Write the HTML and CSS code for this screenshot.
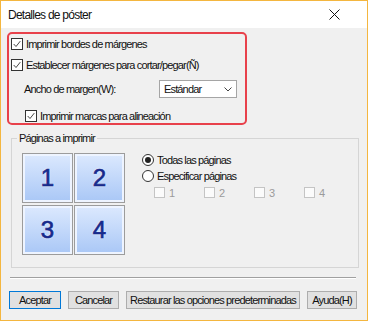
FILE: index.html
```html
<!DOCTYPE html>
<html lang="es">
<head>
  <meta charset="UTF-8" />
  <title>Detalles de póster</title>
  <link rel="stylesheet" href="styles.css">
</head>
<body>
  <div class="window">
    <div class="titlebar">
      <span class="title">Detalles de póster</span>
      <svg class="close" width="11" height="11" viewBox="0 0 11 11">
        <path d="M0.5 0.5 L10.5 10.5 M10.5 0.5 L0.5 10.5" stroke="#111" stroke-width="1" fill="none"/>
      </svg>
    </div>

    <div class="content">
      <!-- Margin options, outlined in red -->
      <div class="highlight">
        <div class="row row-first">
          <span class="box"><svg viewBox="0 0 12 12"><path d="M2 6 L4.8 9 L10 2.5" /></svg></span>
          <span>Imprimir bordes de márgenes</span>
        </div>
        <div class="row row-second">
          <span class="box"><svg viewBox="0 0 12 12"><path d="M2 6 L4.8 9 L10 2.5" /></svg></span>
          <span>Establecer márgenes para cortar/pegar(Ñ)</span>
        </div>
        <div class="row row-combo">
          <span class="combo-label">Ancho de margen(W):</span>
          <div class="combo">
            <span>Estándar</span>
            <svg width="8" height="5" viewBox="0 0 8 5"><path d="M0.5 0.5 L4 4 L7.5 0.5" /></svg>
          </div>
        </div>
        <div class="row row-marks">
          <span class="box"><svg viewBox="0 0 12 12"><path d="M2 6 L4.8 9 L10 2.5" /></svg></span>
          <span>Imprimir marcas para alineación</span>
        </div>
      </div>

      <fieldset class="group">
        <legend>Páginas a imprimir</legend>
        <div class="group-body">
          <div class="tiles">
            <div class="tile">1</div>
            <div class="tile">2</div>
            <div class="tile">3</div>
            <div class="tile">4</div>
          </div>
          <div class="options">
            <div class="radio-row">
              <span class="radio selected"></span>
              <span>Todas las páginas</span>
            </div>
            <div class="radio-row">
              <span class="radio"></span>
              <span>Especificar páginas</span>
            </div>
            <div class="page-checks">
              <div class="page-check"><span class="box disabled"></span>1</div>
              <div class="page-check"><span class="box disabled"></span>2</div>
              <div class="page-check"><span class="box disabled"></span>3</div>
              <div class="page-check"><span class="box disabled"></span>4</div>
            </div>
          </div>
        </div>
      </fieldset>

      <div class="separator"></div>

      <div class="buttons">
        <button class="btn btn-default" style="width: 52px">Aceptar</button>
        <button class="btn" style="width: 51px">Cancelar</button>
        <button class="btn" style="width: 174px">Restaurar las opciones predeterminadas</button>
        <button class="btn" style="width: 50px">Ayuda(H)</button>
      </div>
    </div>
  </div>
</body>
</html>
```

FILE: styles.css
```css
body {
  margin: 0;
  padding: 0;
  font-family: "Liberation Sans", Arial, sans-serif;
  font-size: 11px;
  letter-spacing: -0.85px;
  color: #111;
}

.window {
  width: 368px;
  height: 321px;
  box-sizing: border-box;
  border: 1px solid #f4b63f;
  background-color: #f0f0f0;
  display: flex;
  flex-direction: column;
}

.titlebar {
  height: 27px;
  background: #fff;
  display: flex;
  align-items: center;
  padding-left: 7px;
}

.title {
  font-size: 12px;
  letter-spacing: -0.75px;
  flex: 1;
}

.close {
  margin-right: 27px;
}

.content {
  display: flex;
  flex-direction: column;
}

/* Red outline around the margin options */
.highlight {
  margin: 4px 0 0 6px;
  width: 240px;
  height: 93px;
  box-sizing: border-box;
  border: 2px solid #e8414b;
  border-radius: 5px;
  padding-top: 3px;
}

.row {
  display: flex;
  align-items: center;
  height: 13px;
}

.row-first {
  padding-left: 2px;
}

.row-second {
  padding-left: 2px;
  margin-top: 8px;
}

.row-combo {
  height: 18px;
  margin-top: 9px;
}

.row-marks {
  padding-left: 16px;
  margin-top: 11px;
}

.box {
  width: 12px;
  height: 12px;
  box-sizing: border-box;
  border: 1px solid #333;
  background: #fff;
  margin-right: 3px;
  flex-shrink: 0;
}

.box svg {
  display: block;
  width: 10px;
  height: 10px;
}

.box path {
  stroke: #222;
  stroke-width: 1;
  fill: none;
}

.box.disabled {
  width: 11px;
  height: 11px;
  border-color: #c4c4c4;
  background: #fbfbfb;
  margin-right: 4px;
}

.combo-label {
  width: 135px;
  padding-left: 15px;
}

.combo {
  width: 78px;
  height: 18px;
  box-sizing: border-box;
  border: 1px solid #a5a5a5;
  background: #fff;
  display: flex;
  align-items: center;
  justify-content: space-between;
  padding: 0 4px 0 4px;
}

.combo path {
  stroke: #444;
  stroke-width: 1;
  fill: none;
}

/* Pages group box */
.group {
  margin: 7px 0 0 10px;
  width: 348px;
  height: 136px;
  box-sizing: border-box;
  border: 1px solid #d5d5d5;
  padding: 0;
}

.group legend {
  margin-left: 5px;
  padding: 0 2px;
  line-height: 13px;
}

.group-body {
  display: flex;
  padding: 8px 0 0 10px;
}

.tiles {
  display: grid;
  grid-template-columns: 51px 51px;
  grid-template-rows: 50px 50px;
  column-gap: 1px;
  row-gap: 2px;
}

.tile {
  box-sizing: border-box;
  border: 1px solid #9c9c9c;
  box-shadow: inset 0 0 0 2px #eef4ff;
  background: linear-gradient(#dce9fe, #a9c7f6);
  display: flex;
  align-items: center;
  justify-content: center;
  font-size: 24px;
  letter-spacing: 0;
  color: #172a8c;
  -webkit-text-stroke: 0.7px #172a8c;
  text-shadow: 0 0 1px #fff, 0 0 2px #fff;
}

.options {
  margin-left: 17px;
}

.radio-row {
  display: flex;
  align-items: center;
  height: 14px;
  margin-bottom: 2px;
}

.radio {
  width: 12px;
  height: 12px;
  box-sizing: border-box;
  border: 1px solid #333;
  border-radius: 50%;
  background: #fff;
  margin-right: 3px;
  display: flex;
  align-items: center;
  justify-content: center;
}

.radio.selected::after {
  content: "";
  width: 6px;
  height: 6px;
  border-radius: 50%;
  background: #222;
}

.page-checks {
  display: flex;
  margin-top: 3px;
  padding-left: 12px;
}

.page-check {
  width: 50px;
  display: flex;
  align-items: center;
  height: 13px;
  color: #9b9b9b;
}

.separator {
  margin: 9px 0 0 9px;
  width: 346px;
  height: 1px;
  background: #a0a0a0;
  border-bottom: 1px solid #fff;
}

.buttons {
  display: flex;
  gap: 7px;
  margin: 12px 0 0 8px;
}

.btn {
  height: 18px;
  box-sizing: border-box;
  padding: 0;
  border: 1px solid #adadad;
  background: #e1e1e1;
  font-family: inherit;
  font-size: 11px;
  letter-spacing: -0.85px;
  color: #111;
  white-space: nowrap;
}

.btn-default {
  border-color: #0078d7;
}
```
